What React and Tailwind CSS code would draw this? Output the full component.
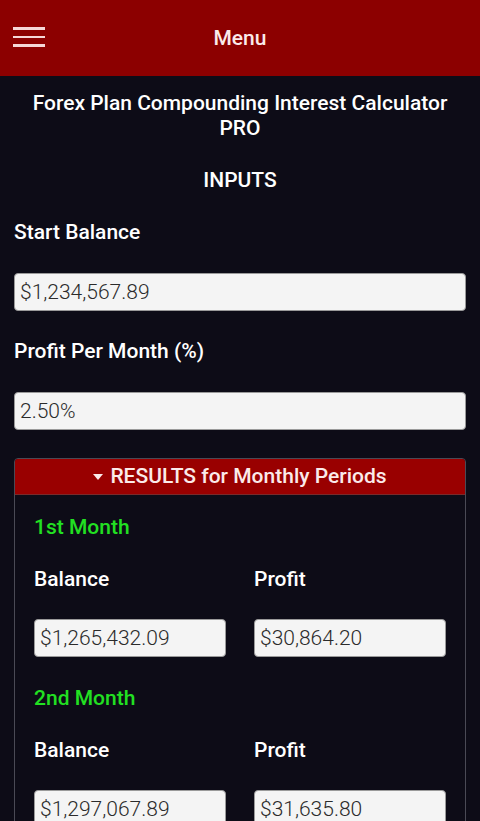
import { useState } from 'react'

function Field({ value, onChange }) {
  return (
    <input
      value={value}
      onChange={(e) => onChange(e.target.value)}
      className="block w-full h-[38px] rounded-[4px] border border-[#9a9a9a] bg-[#f4f4f4] px-[5px] text-[21px] font-light text-[#2b2b2b] outline-none"
    />
  )
}

function MonthBlock({ title, balance, profit, first }) {
  return (
    <div className={first ? '' : 'mt-[29px]'}>
      <div className="text-[21px] leading-[25px] font-medium text-[#22e022]">{title}</div>
      <div className="mt-[27px] grid grid-cols-2 gap-x-[28px]">
        <div>
          <div className="text-[21px] leading-[25px] font-medium text-white">Balance</div>
          <div className="mt-[27px]">
            <Field value={balance} onChange={() => {}} />
          </div>
        </div>
        <div>
          <div className="text-[21px] leading-[25px] font-medium text-white">Profit</div>
          <div className="mt-[27px]">
            <Field value={profit} onChange={() => {}} />
          </div>
        </div>
      </div>
    </div>
  )
}

export default function App() {
  const [start, setStart] = useState('$1,234,567.89')
  const [pct, setPct] = useState('2.50%')

  return (
    <div className="min-h-[821px] bg-[#0d0c17] font-['Roboto',sans-serif] text-white">
      <div className="relative flex h-[76px] items-center justify-center bg-[#8c0000]">
        <button className="absolute left-[13px] top-[27px] flex w-[32px] flex-col gap-[6px]">
          <span className="block h-[2.5px] w-full bg-[#f6d6d6]" />
          <span className="block h-[2.5px] w-full bg-[#f6d6d6]" />
          <span className="block h-[2.5px] w-full bg-[#f6d6d6]" />
        </button>
        <span className="mt-[2px] text-[21px] font-medium text-[#fbeaea]">Menu</span>
      </div>

      <div className="px-[14px] pb-6">
        <h1 className="pt-[15px] text-center text-[21px] leading-[25px] font-medium">
          Forex Plan Compounding Interest Calculator
          <br />
          PRO
        </h1>
        <h2 className="mt-[27px] text-center text-[21px] leading-[25px] font-medium">INPUTS</h2>

        <div className="mt-[27px] text-[21px] leading-[25px] font-medium">Start Balance</div>
        <div className="mt-[28px]">
          <Field value={start} onChange={setStart} />
        </div>

        <div className="mt-[28px] text-[21px] leading-[25px] font-medium">Profit Per Month (%)</div>
        <div className="mt-[28px]">
          <Field value={pct} onChange={setPct} />
        </div>

        <div className="mt-[28px] overflow-hidden rounded-[4px] border border-[#4a4a55]">
          <div className="flex h-[36px] items-center justify-center gap-[7px] border-b border-[#7a2a2a] bg-[#990000]">
            <svg width="10" height="6" viewBox="0 0 10 6" className="mt-[1px]">
              <path d="M0 0 L10 0 L5 6 Z" fill="#fbeaea" />
            </svg>
            <span className="text-[21px] font-medium text-[#fbeaea]">RESULTS for Monthly Periods</span>
          </div>
          <div className="px-[19px] pt-[20px] pb-[20px]">
            <MonthBlock first title="1st Month" balance="$1,265,432.09" profit="$30,864.20" />
            <MonthBlock title="2nd Month" balance="$1,297,067.89" profit="$31,635.80" />
          </div>
        </div>
      </div>
    </div>
  )
}
